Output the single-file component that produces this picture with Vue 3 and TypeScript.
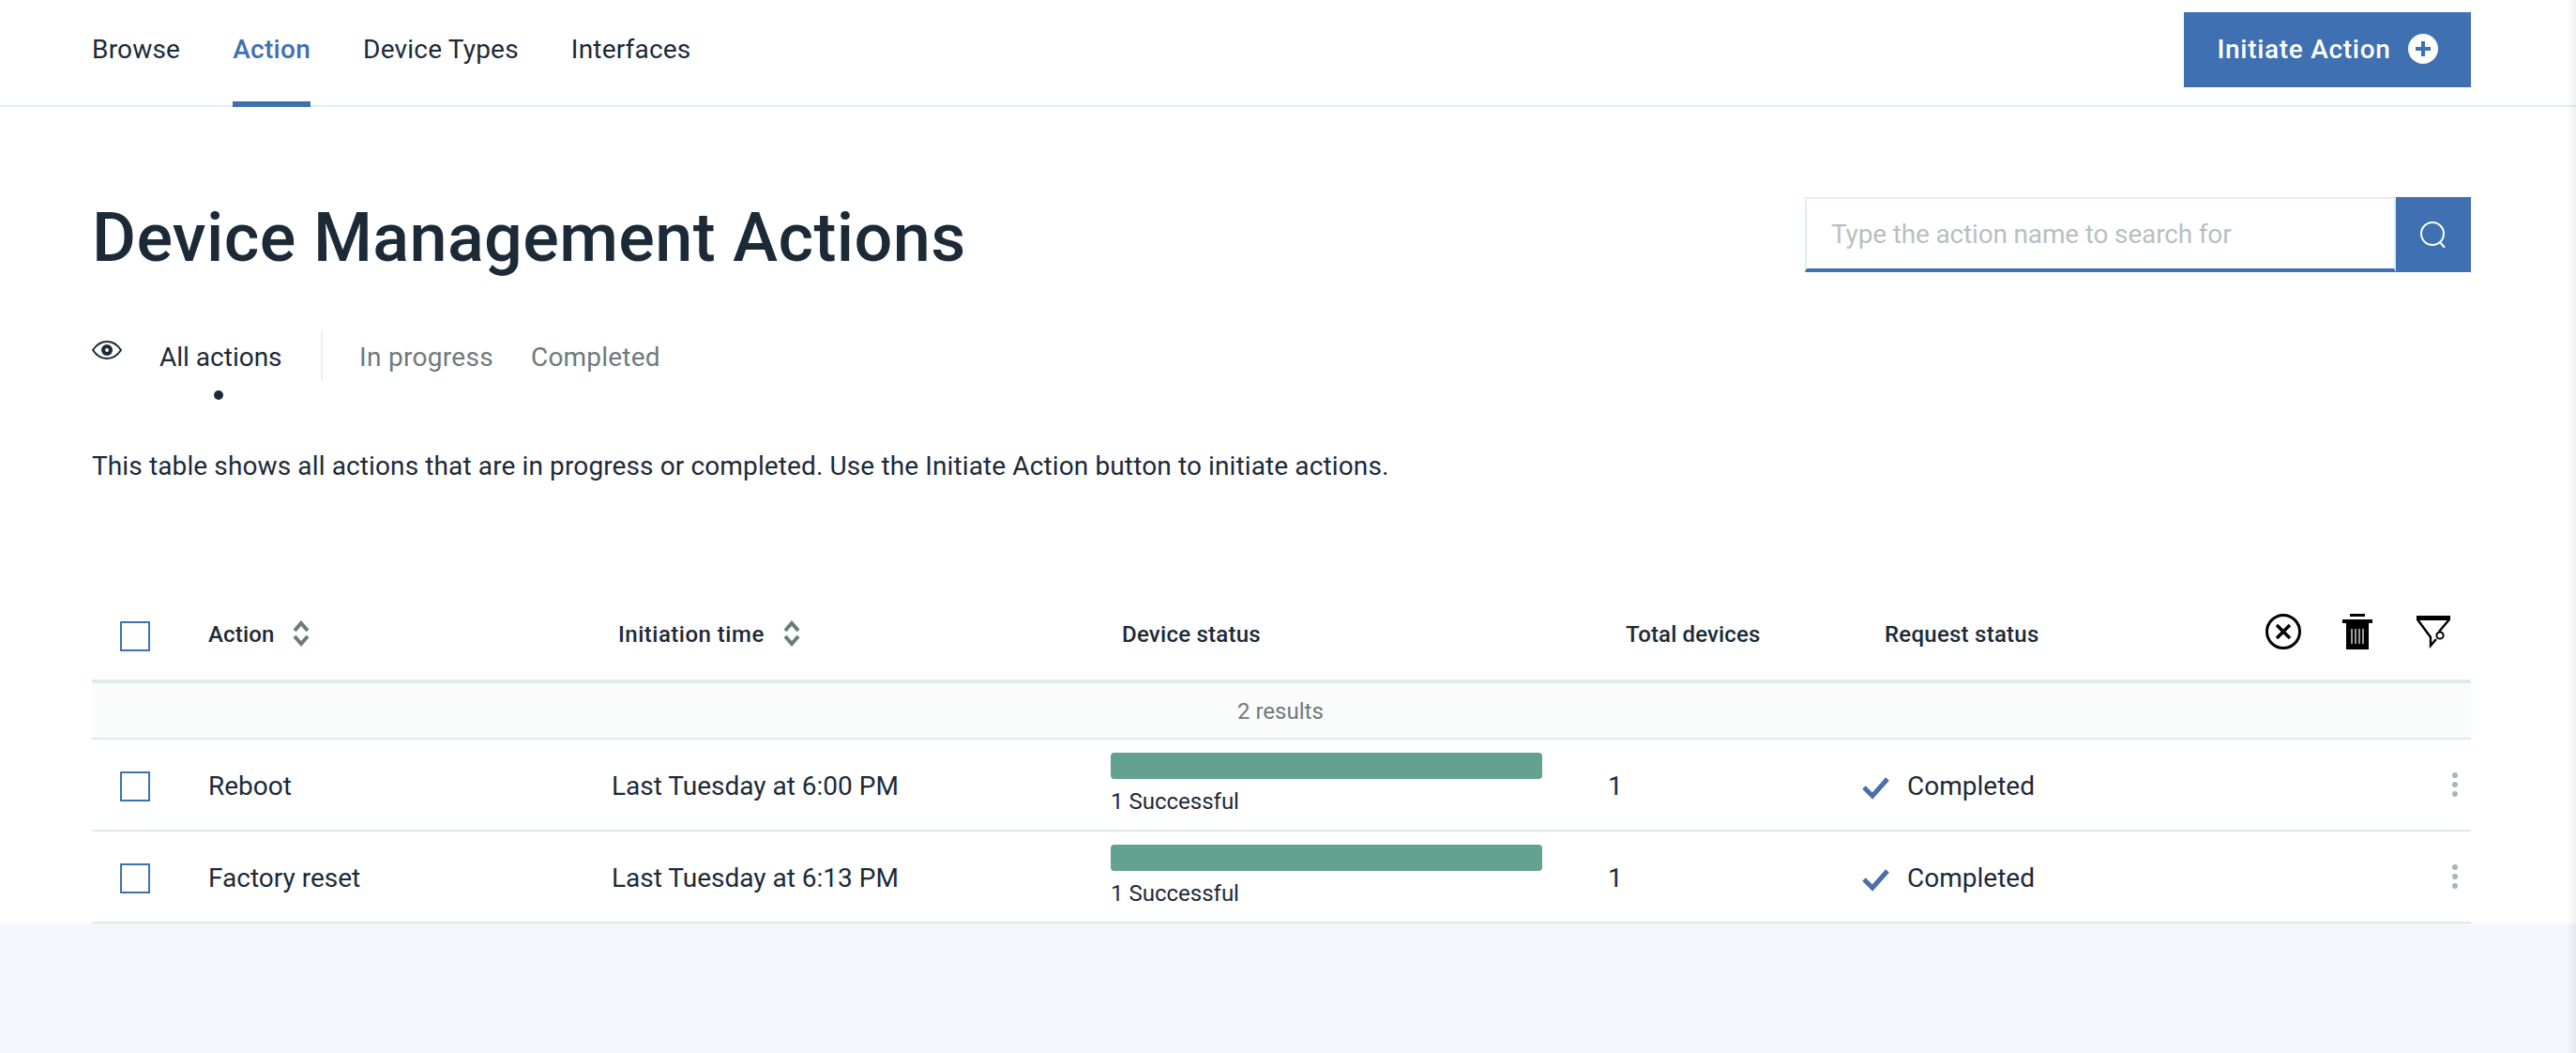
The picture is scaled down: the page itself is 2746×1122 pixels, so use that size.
<script setup lang="ts">
interface ActionRow {
  name: string
  time: string
  success: number
  total: number
  status: string
}

const navItems = ['Browse', 'Action', 'Device Types', 'Interfaces']

const rows: ActionRow[] = [
  { name: 'Reboot', time: 'Last Tuesday at 6:00 PM', success: 1, total: 1, status: 'Completed' },
  { name: 'Factory reset', time: 'Last Tuesday at 6:13 PM', success: 1, total: 1, status: 'Completed' },
]
</script>

<template>
  <div class="page">
    <div class="sheet">
      <header class="topbar">
        <nav class="nav">
          <a v-for="item in navItems" :key="item" class="nav-link" :class="{ active: item === 'Action' }">{{ item }}</a>
        </nav>
        <button class="primary-btn">
          <span>Initiate Action</span>
          <svg class="plus" viewBox="0 0 32 32">
            <circle cx="16" cy="16" r="16" fill="#fff" />
            <path d="M16 8v16M8 16h16" stroke="#3e70b2" stroke-width="4" />
          </svg>
        </button>
      </header>

      <main class="content">
        <div class="title-row">
          <h1 class="title">Device Management Actions</h1>
          <div class="search">
            <div class="search-input">Type the action name to search for</div>
            <div class="search-btn">
              <svg viewBox="0 0 28 28" width="28" height="28" fill="none" stroke="#fff" stroke-width="2">
                <circle cx="13" cy="13" r="12" />
                <path d="M21 22l5 6" />
              </svg>
            </div>
          </div>
        </div>

        <div class="tabs">
          <svg class="eye" viewBox="0 0 32 20" fill="none">
            <path d="M1 10C5 4 10 1 16 1s11 3 15 9c-4 6-9 9-15 9S5 16 1 10z" stroke="#1c2a38" stroke-width="2" />
            <circle cx="16" cy="10" r="6" fill="#1c2a38" />
            <circle cx="16" cy="10" r="2" fill="#fff" />
          </svg>
          <span class="tab tab-active">All actions<i class="tab-dot"></i></span>
          <span class="tab-divider"></span>
          <span class="tab tab-progress">In progress</span>
          <span class="tab tab-done">Completed</span>
        </div>

        <p class="description">This table shows all actions that are in progress or completed. Use the Initiate Action button to initiate actions.</p>

        <section class="table">
          <div class="grid table-head">
            <div class="cell-check"><span class="checkbox"></span></div>
            <div class="th">
              Action
              <svg class="sort" viewBox="0 0 18 28" fill="none" stroke="#6b7b7b" stroke-width="4">
                <path d="M2 11l7-8 7 8M2 17l7 8 7-8" />
              </svg>
            </div>
            <div class="th th-time">
              Initiation time
              <svg class="sort" viewBox="0 0 18 28" fill="none" stroke="#6b7b7b" stroke-width="4">
                <path d="M2 11l7-8 7 8M2 17l7 8 7-8" />
              </svg>
            </div>
            <div class="th th-device">Device status</div>
            <div class="th th-total">Total devices</div>
            <div class="th th-request">
              <span>Request status</span>
              <span class="bulk-icons">
                <svg class="icon-cancel" viewBox="0 0 38 38" fill="none" stroke="#000">
                  <circle cx="19" cy="19" r="17.5" stroke-width="3" />
                  <path d="M12 12l14 14M26 12L12 26" stroke-width="3.5" />
                </svg>
                <svg class="icon-trash" viewBox="0 0 32 38">
                  <path d="M8 0h16v3H8zM0 6h32v4H0zM4 10h24v28H4z" fill="#000" />
                  <path d="M10 16v16M14 16v16M18 16v16M22 16v16" stroke="#fff" stroke-width="1.2" />
                </svg>
                <svg class="icon-filter" viewBox="0 0 36 35" fill="none" stroke="#000">
                  <path d="M0 0h36v5H0z" fill="#000" stroke="none" />
                  <path d="M1 4l14 19v9l6-7" stroke-width="2.4" />
                  <path d="M35 4L24 17" stroke-width="2.4" />
                  <circle cx="25" cy="21" r="3.6" stroke-width="2" />
                </svg>
              </span>
            </div>
          </div>

          <div class="results">2 results</div>

          <div v-for="row in rows" :key="row.name" class="grid table-row">
            <div class="cell-check"><span class="checkbox"></span></div>
            <div class="td">{{ row.name }}</div>
            <div class="td td-time">{{ row.time }}</div>
            <div class="td-bar">
              <div class="bar" :style="{ width: (row.success / row.total) * 460 + 'px' }"></div>
              <div class="bar-label">{{ row.success }} Successful</div>
            </div>
            <div class="td td-total">{{ row.total }}</div>
            <div class="td td-status">
              <svg class="check" viewBox="0 0 29 25" fill="none" stroke="#4a70a9" stroke-width="5">
                <path d="M2 12l9 9L27 3" />
              </svg>
              <span>{{ row.status }}</span>
              <span class="kebab"><i></i><i></i><i></i></span>
            </div>
          </div>
        </section>
      </main>
    </div>
    <div class="edge-shadow"></div>
  </div>
</template>

<style scoped>
.page {
  position: relative;
  height: 1122px;
  background: #f4f7fb;
  overflow: hidden;
  font-family: Roboto, "Open Sans", sans-serif;
  color: #1c2a38;
}

.sheet {
  height: 984px;
  background: #fff;
}

.edge-shadow {
  position: absolute;
  top: 0;
  right: 0;
  bottom: 0;
  width: 10px;
  background: linear-gradient(to right, rgba(0, 0, 0, 0), rgba(0, 0, 0, 0.06));
}

.topbar {
  display: flex;
  justify-content: space-between;
  height: 114px;
  box-sizing: border-box;
  padding: 0 112px 0 98px;
  border-bottom: 2px solid #e3ecec;
}

.nav {
  display: flex;
  gap: 56px;
}

.nav-link {
  height: 110px;
  line-height: 106px;
  font-size: 28px;
  letter-spacing: 0.2px;
  color: #1c2a38;
}

.nav-link.active {
  height: 114px;
  box-sizing: border-box;
  color: #3e70b2;
  font-weight: 500;
  letter-spacing: 0.3px;
  border-bottom: 6px solid #3e70b2;
}

.primary-btn {
  display: flex;
  align-items: center;
  justify-content: center;
  gap: 18px;
  width: 306px;
  height: 80px;
  margin-top: 13px;
  padding: 0 0 2px;
  border: none;
  background: #3e70b2;
  color: #fff;
  font-family: inherit;
  font-size: 28px;
  font-weight: 500;
  letter-spacing: 0.7px;
}

.plus {
  width: 32px;
  height: 32px;
}

.content {
  padding: 96px 112px 0 98px;
}

.title-row {
  display: flex;
  justify-content: space-between;
  align-items: center;
  height: 80px;
}

.title {
  margin: 0;
  padding-top: 8px;
  font-size: 72px;
  font-weight: 500;
  line-height: 80px;
  letter-spacing: 0.38px;
  color: #1c2a38;
}

.search {
  display: flex;
  width: 710px;
  height: 80px;
}

.search-input {
  flex: 1;
  box-sizing: border-box;
  padding: 0 0 0 26px;
  border: 2px solid #e3ecec;
  border-bottom: 4px solid #3e70b2;
  font-size: 28px;
  line-height: 76px;
  letter-spacing: -0.16px;
  color: #b8c0c0;
}

.search-btn {
  display: flex;
  align-items: center;
  justify-content: center;
  width: 80px;
  background: #3e70b2;
}

.tabs {
  display: flex;
  align-items: center;
  height: 54px;
  margin-top: 62px;
  font-size: 28px;
}

.eye {
  width: 32px;
  height: 20px;
  margin: -12px 40px 0 0;
}

.tab {
  position: relative;
  padding-top: 4px;
  line-height: 54px;
}

.tab-active {
  width: 172px;
}

.tab-dot {
  position: absolute;
  left: 58px;
  top: 66px;
  width: 10px;
  height: 10px;
  border-radius: 50%;
  background: #1c2a38;
}

.tab-divider {
  width: 2px;
  height: 54px;
  background: #eeeeee;
}

.tab-progress {
  margin-left: 39px;
  width: 183px;
  letter-spacing: 0.3px;
  color: #6f7a7a;
}

.tab-done {
  letter-spacing: 0.2px;
  color: #6f7a7a;
}

.description {
  margin: 71px 0 0;
  font-size: 28px;
  line-height: 40px;
  letter-spacing: 0.12px;
}

.table {
  margin-top: 123px;
}

.grid {
  display: grid;
  grid-template-columns: 124px 432px 530px 530px 271px 1fr;
  align-items: center;
}

.table-head {
  height: 84px;
  border-bottom: 4px solid #e0e9e9;
}

.cell-check {
  display: flex;
  padding-left: 30px;
}

.checkbox {
  width: 32px;
  height: 32px;
  box-sizing: border-box;
  border: 2px solid #3e70b2;
}

.table-head .checkbox {
  margin-top: -8px;
}

.th {
  display: flex;
  align-items: center;
  gap: 20px;
  margin-top: -12px;
  font-size: 24px;
  font-weight: 500;
  line-height: 32px;
  letter-spacing: 0.15px;
}

.th-time {
  padding-left: 5px;
  letter-spacing: 0.5px;
}

.th-device {
  padding-left: 12px;
  letter-spacing: 0.25px;
}

.th-total {
  padding-left: 19px;
}

.th-request {
  padding-left: 24px;
  justify-content: space-between;
  letter-spacing: 0.25px;
}

.sort {
  width: 18px;
  height: 28px;
  margin-top: -2px;
}

.bulk-icons {
  display: flex;
  align-items: center;
  margin-top: -6px;
  gap: 44px;
  padding-right: 22px;
}

.icon-cancel {
  width: 38px;
  height: 38px;
}

.icon-trash {
  width: 32px;
  height: 38px;
}

.icon-filter {
  width: 36px;
  height: 35px;
  margin-left: 3px;
}

.results {
  height: 58px;
  box-sizing: border-box;
  padding-left: 1221px;
  background: #fafbfb;
  font-size: 24px;
  line-height: 60px;
  color: #6f7a7a;
}

.table-row {
  height: 98px;
  box-sizing: border-box;
  padding-top: 4px;
  border-top: 2px solid #e0e9e9;
}

.table-row:last-child {
  height: 100px;
  border-bottom: 2px solid #e0e9e9;
}

.td {
  font-size: 28px;
  line-height: 36px;
}

.td-time {
  margin-left: -2px;
}

.td-bar {
  align-self: start;
  padding-top: 10px;
}

.bar {
  height: 28px;
  border-radius: 4px;
  background: #62a28f;
}

.bar-label {
  margin-top: 9px;
  font-size: 24px;
  line-height: 30px;
}

.td-status {
  position: relative;
  display: flex;
  align-items: center;
  gap: 19px;
}

.check {
  width: 29px;
  height: 25px;
  margin-top: 2px;
}

.kebab {
  position: absolute;
  right: 14px;
  top: 3px;
  display: flex;
  flex-direction: column;
  gap: 4px;
}

.kebab i {
  width: 6px;
  height: 6px;
  border-radius: 50%;
  background: #a9b5b5;
}
</style>
